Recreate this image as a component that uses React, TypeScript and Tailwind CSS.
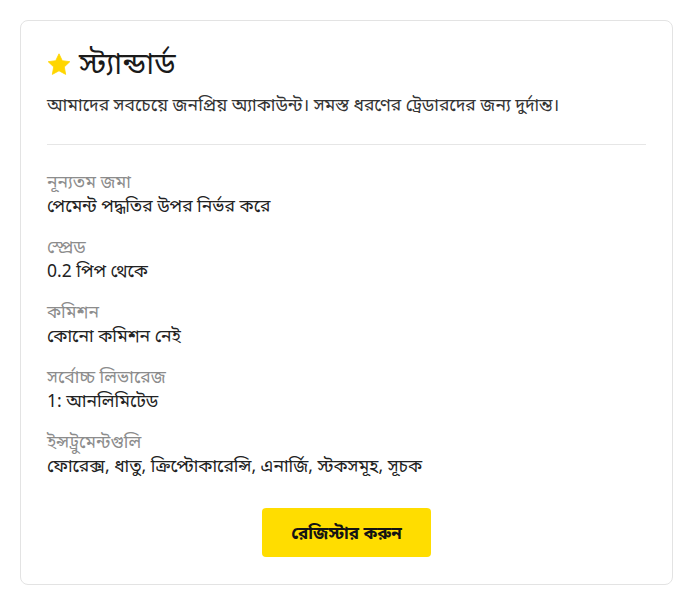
const rows = [
  { label: "নূন্যতম জমা", value: "পেমেন্ট পদ্ধতির উপর নির্ভর করে" },
  { label: "স্প্রেড", value: "0.2 পিপ থেকে" },
  { label: "কমিশন", value: "কোনো কমিশন নেই" },
  { label: "সর্বোচ্চ লিভারেজ", value: "1: আনলিমিটেড" },
  { label: "ইন্সট্রুমেন্টগুলি", value: "ফোরেক্স, ধাতু, ক্রিপ্টোকারেন্সি, এনার্জি, স্টকসমূহ, সূচক" },
];

function Star() {
  return (
    <svg width="24" height="23" viewBox="0 0 24 23" className="shrink-0 mt-[2px]">
      <path
        d="M12 0.8l3.3 6.9 7.5 1-5.5 5.2 1.4 7.5L12 17.8l-6.7 3.6 1.4-7.5L1.2 8.7l7.5-1z"
        fill="#ffd600"
        stroke="#ffd600"
        strokeWidth="0.8"
        strokeLinejoin="round"
      />
    </svg>
  );
}

export default function App() {
  return (
    <div
      className="min-h-[608px] w-[691px] bg-white pt-5 pl-5 text-[#1f1f1f]"
      style={{ fontFamily: '"Noto Sans", "Noto Sans Bengali", sans-serif' }}
    >
      <div className="w-[653px] h-[565px] rounded-lg border border-[#e3e3e3] px-[26px] pt-[22px]">
        <div className="flex items-center gap-[8px]">
          <Star />
          <h1 className="text-[30px] leading-[40px] font-normal text-[#1a1a1a]">স্ট্যান্ডার্ড</h1>
        </div>
        <p className="mt-[9px] text-[17.5px] leading-6 text-[#333]">
          আমাদের সবচেয়ে জনপ্রিয় অ্যাকাউন্ট। সমস্ত ধরণের ট্রেডারদের জন্য দুর্দান্ত।
        </p>
        <div className="mt-[28px] h-px bg-[#e6e6e6]" />
        <div className="mt-[24px] flex flex-col gap-[17px]">
          {rows.map((r) => (
            <div key={r.label} className="flex flex-col">
              <span className="text-[17.5px] leading-6 text-[#8c8c8c]">{r.label}</span>
              <span className="text-[17.5px] leading-6 text-[#222]">{r.value}</span>
            </div>
          ))}
        </div>
        <div className="mt-[31px] flex justify-center">
          <button
            type="button"
            className="w-[169px] h-[49px] rounded bg-[#ffdd00] text-[17px] font-bold text-[#141414]"
          >
            রেজিস্টার করুন
          </button>
        </div>
      </div>
    </div>
  );
}
